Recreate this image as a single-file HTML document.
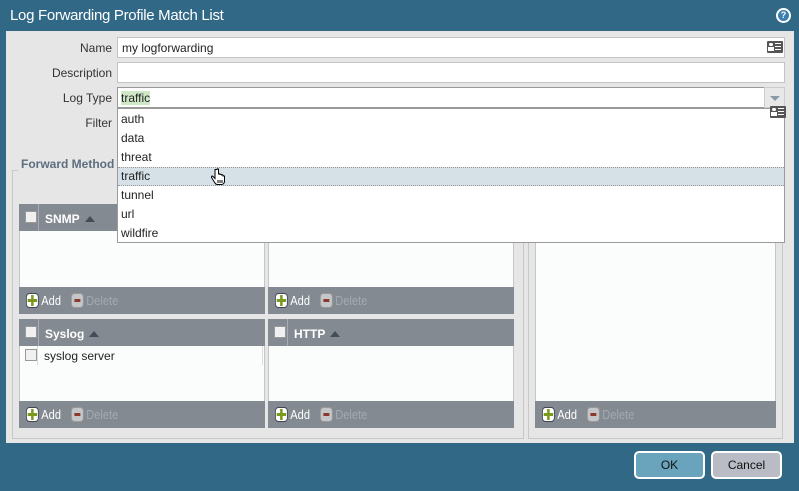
<!DOCTYPE html>
<html><head><meta charset="utf-8"><style>
*{box-sizing:border-box;margin:0;padding:0}
body{width:799px;height:491px;background:#306886;font-family:"Liberation Sans",sans-serif;position:relative;overflow:hidden;font-size:12px;color:#222}
.a{position:absolute}
.title{left:10px;top:7px;color:#fff;font-size:15px;letter-spacing:-0.3px}
.panel{left:6px;top:31px;width:788px;height:412px;background:#e6e6e6}
.lbl{right:687px;text-align:right;color:#333;font-size:12px}
.inp{background:#fff;border:1px solid #c3c3c3;left:117px;width:668px;height:21px}
.fs{border:1px solid #c8c8c8}
.grid{background:#fbfcfc;border:1px solid #c4c6c8}
.hdr{background:#838a91;color:#fff;font-weight:bold;font-size:12px}
.ftr{background:#838a91;color:#fff}
.cb{width:12px;height:12px;background:#f0f0f0;border:1px solid #999}
.btn{display:flex;align-items:center;font-size:13px;transform:scaleX(.85);transform-origin:left}
.ic{width:15px;height:15px;border-radius:4px;margin-right:3px;background:#fff;border:1px solid #445;position:relative}
.plus::before{content:"";position:absolute;left:5px;top:1px;width:3px;height:11px;background:#7a9a1e}
.plus::after{content:"";position:absolute;left:1px;top:5px;width:11px;height:3px;background:#7a9a1e}
.minus{background:#c4c6c8;border-color:#999}
.minus::after{content:"";position:absolute;left:3px;top:5px;width:7px;height:3px;background:#8a3a2a}
.dd{left:117px;top:108px;width:668px;height:135px;background:#fff;border:1px solid #9a9a9a}
.it{position:absolute;left:0;width:100%;height:19px;padding-left:3px;line-height:19px;font-size:12px}
.tri{width:0;height:0;border-left:5px solid transparent;border-right:5px solid transparent;border-bottom:6px solid #444c55;display:inline-block;margin-left:5px;vertical-align:1px}
.card{width:16px;height:12px;background:#555;border-radius:1px}
</style></head><body>
<div class="a title">Log Forwarding Profile Match List</div>
<div class="a" style="left:776px;top:8px;width:15px;height:15px;border-radius:50%;background:#fff;"><div style="position:absolute;left:2px;top:2px;width:11px;height:11px;border-radius:50%;background:#3a7fb0;color:#fff;font-size:9px;font-weight:bold;text-align:center;line-height:11px">?</div></div>
<div class="a panel"></div>

<div class="a lbl" style="top:41px">Name</div>
<div class="a lbl" style="top:66px">Description</div>
<div class="a lbl" style="top:91px">Log Type</div>
<div class="a lbl" style="top:116px">Filter</div>

<div class="a inp" style="top:37px;padding:3px 4px;">my logforwarding</div>
<div class="a card" style="left:767px;top:41px"><div style="position:absolute;left:2px;top:2px;width:4px;height:3px;border-radius:2px;background:#fff"></div><div style="position:absolute;left:1px;top:6px;width:6px;height:4px;background:#fff"></div><div style="position:absolute;left:8px;top:2px;width:6px;height:1px;background:#fff;box-shadow:0 3px #fff,0 6px #fff"></div></div>
<div class="a inp" style="top:62px"></div>
<div class="a inp" style="top:87px;width:648px;border-color:#999;padding:3px 3px"><span style="background:#cfe9c8">traffic</span></div>
<div class="a" style="left:764px;top:87px;width:21px;height:21px;background:#e8e8e8;border:1px solid #ccc"><div style="position:absolute;left:5px;top:8px;border-left:5px solid transparent;border-right:5px solid transparent;border-top:5px solid #8a9aa6"></div></div>

<div class="a fs" style="left:12px;top:170px;width:512px;height:269px"></div>
<div class="a" style="left:18px;top:157px;background:#e6e6e6;padding:0 3px;color:#5c6e7f;font-weight:bold;font-size:12px">Forward Method</div>
<div class="a fs" style="left:528px;top:170px;width:255px;height:269px"></div>

<div class="a grid" style="left:19px;top:204px;width:246px;height:110px"></div>
<div class="a hdr" style="left:19px;top:204px;width:246px;height:27px"><div class="a cb" style="left:6px;top:7px"></div><div class="a" style="left:19px;top:0;width:1px;height:27px;background:#aab"></div><div class="a" style="left:26px;top:8px">SNMP<span class="tri"></span></div></div>
<div class="a ftr" style="left:19px;top:287px;width:246px;height:27px"><div class="a btn" style="left:7px;top:6px"><div class="ic plus"></div>Add</div><div class="a btn" style="left:52px;top:6px;color:#a4aab0"><div class="ic minus"></div>Delete</div></div>

<div class="a grid" style="left:268px;top:204px;width:246px;height:110px"></div>
<div class="a hdr" style="left:268px;top:204px;width:246px;height:27px"></div>
<div class="a ftr" style="left:268px;top:287px;width:246px;height:27px"><div class="a btn" style="left:7px;top:6px"><div class="ic plus"></div>Add</div><div class="a btn" style="left:52px;top:6px;color:#a4aab0"><div class="ic minus"></div>Delete</div></div>

<div class="a grid" style="left:19px;top:319px;width:246px;height:109px"></div>
<div class="a hdr" style="left:19px;top:319px;width:246px;height:27px"><div class="a cb" style="left:6px;top:7px"></div><div class="a" style="left:19px;top:0;width:1px;height:27px;background:#aab"></div><div class="a" style="left:26px;top:8px">Syslog<span class="tri"></span></div></div>
<div class="a cb" style="left:25px;top:349px"></div>
<div class="a" style="left:37px;top:346px;width:1px;height:19px;background:#ddd"></div>
<div class="a" style="left:262px;top:346px;width:1px;height:19px;background:#ddd"></div>
<div class="a" style="left:44px;top:349px;font-size:12px">syslog server</div>
<div class="a ftr" style="left:19px;top:401px;width:246px;height:27px"><div class="a btn" style="left:7px;top:6px"><div class="ic plus"></div>Add</div><div class="a btn" style="left:52px;top:6px;color:#a4aab0"><div class="ic minus"></div>Delete</div></div>

<div class="a grid" style="left:268px;top:319px;width:246px;height:109px"></div>
<div class="a hdr" style="left:268px;top:319px;width:246px;height:27px"><div class="a cb" style="left:6px;top:7px"></div><div class="a" style="left:19px;top:0;width:1px;height:27px;background:#aab"></div><div class="a" style="left:26px;top:8px">HTTP<span class="tri"></span></div></div>
<div class="a ftr" style="left:268px;top:401px;width:246px;height:27px"><div class="a btn" style="left:7px;top:6px"><div class="ic plus"></div>Add</div><div class="a btn" style="left:52px;top:6px;color:#a4aab0"><div class="ic minus"></div>Delete</div></div>

<div class="a grid" style="left:535px;top:200px;width:241px;height:228px"></div>
<div class="a ftr" style="left:535px;top:401px;width:241px;height:27px"><div class="a btn" style="left:7px;top:6px"><div class="ic plus"></div>Add</div><div class="a btn" style="left:52px;top:6px;color:#a4aab0"><div class="ic minus"></div>Delete</div></div>

<div class="a dd">
<div class="it" style="top:1px">auth</div>
<div class="it" style="top:20px">data</div>
<div class="it" style="top:39px">threat</div>
<div class="it" style="top:58px;background:#d6e0e7;border-top:1px dotted #999;border-bottom:1px dotted #999;line-height:17px">traffic</div>
<div class="it" style="top:77px">tunnel</div>
<div class="it" style="top:96px">url</div>
<div class="it" style="top:115px">wildfire</div>
</div>
<div class="a card" style="left:770px;top:106px"><div style="position:absolute;left:2px;top:2px;width:4px;height:3px;border-radius:2px;background:#fff"></div><div style="position:absolute;left:1px;top:6px;width:6px;height:4px;background:#fff"></div><div style="position:absolute;left:8px;top:2px;width:6px;height:1px;background:#fff;box-shadow:0 3px #fff,0 6px #fff"></div></div>
<svg class="a" style="left:211px;top:168px" width="16" height="18" viewBox="0 0 16 18"><path d="M4 1.5v9l-2-2c-1-1-2.2 0-1.5 1l3.5 5.5c.5 1 1.5 1.5 2.5 1.5h4c1.5 0 3-1.5 3-3v-5c0-1-1.5-1-1.5 0v-1c0-1-1.5-1-1.5 0v-.5c0-1-1.5-1-1.5 0v-.5c0-1-1.5-1-1.5 0V1.5c0-1-1.5-1-1.5 0z" fill="#fff" stroke="#000" stroke-width="1"/><path d="M7 12v3M9 12v3M11 12v3" stroke="#000" stroke-width="1"/></svg>

<div class="a" style="left:634px;top:451px;width:71px;height:28px;background:#6aa4bc;border:2px solid #fff;border-radius:5px;text-align:center;line-height:24px;font-size:12px;color:#111">OK</div>
<div class="a" style="left:711px;top:451px;width:71px;height:28px;background:#b9bcc4;border:2px solid #fff;border-radius:5px;text-align:center;line-height:24px;font-size:12px;color:#111">Cancel</div>
</body></html>
